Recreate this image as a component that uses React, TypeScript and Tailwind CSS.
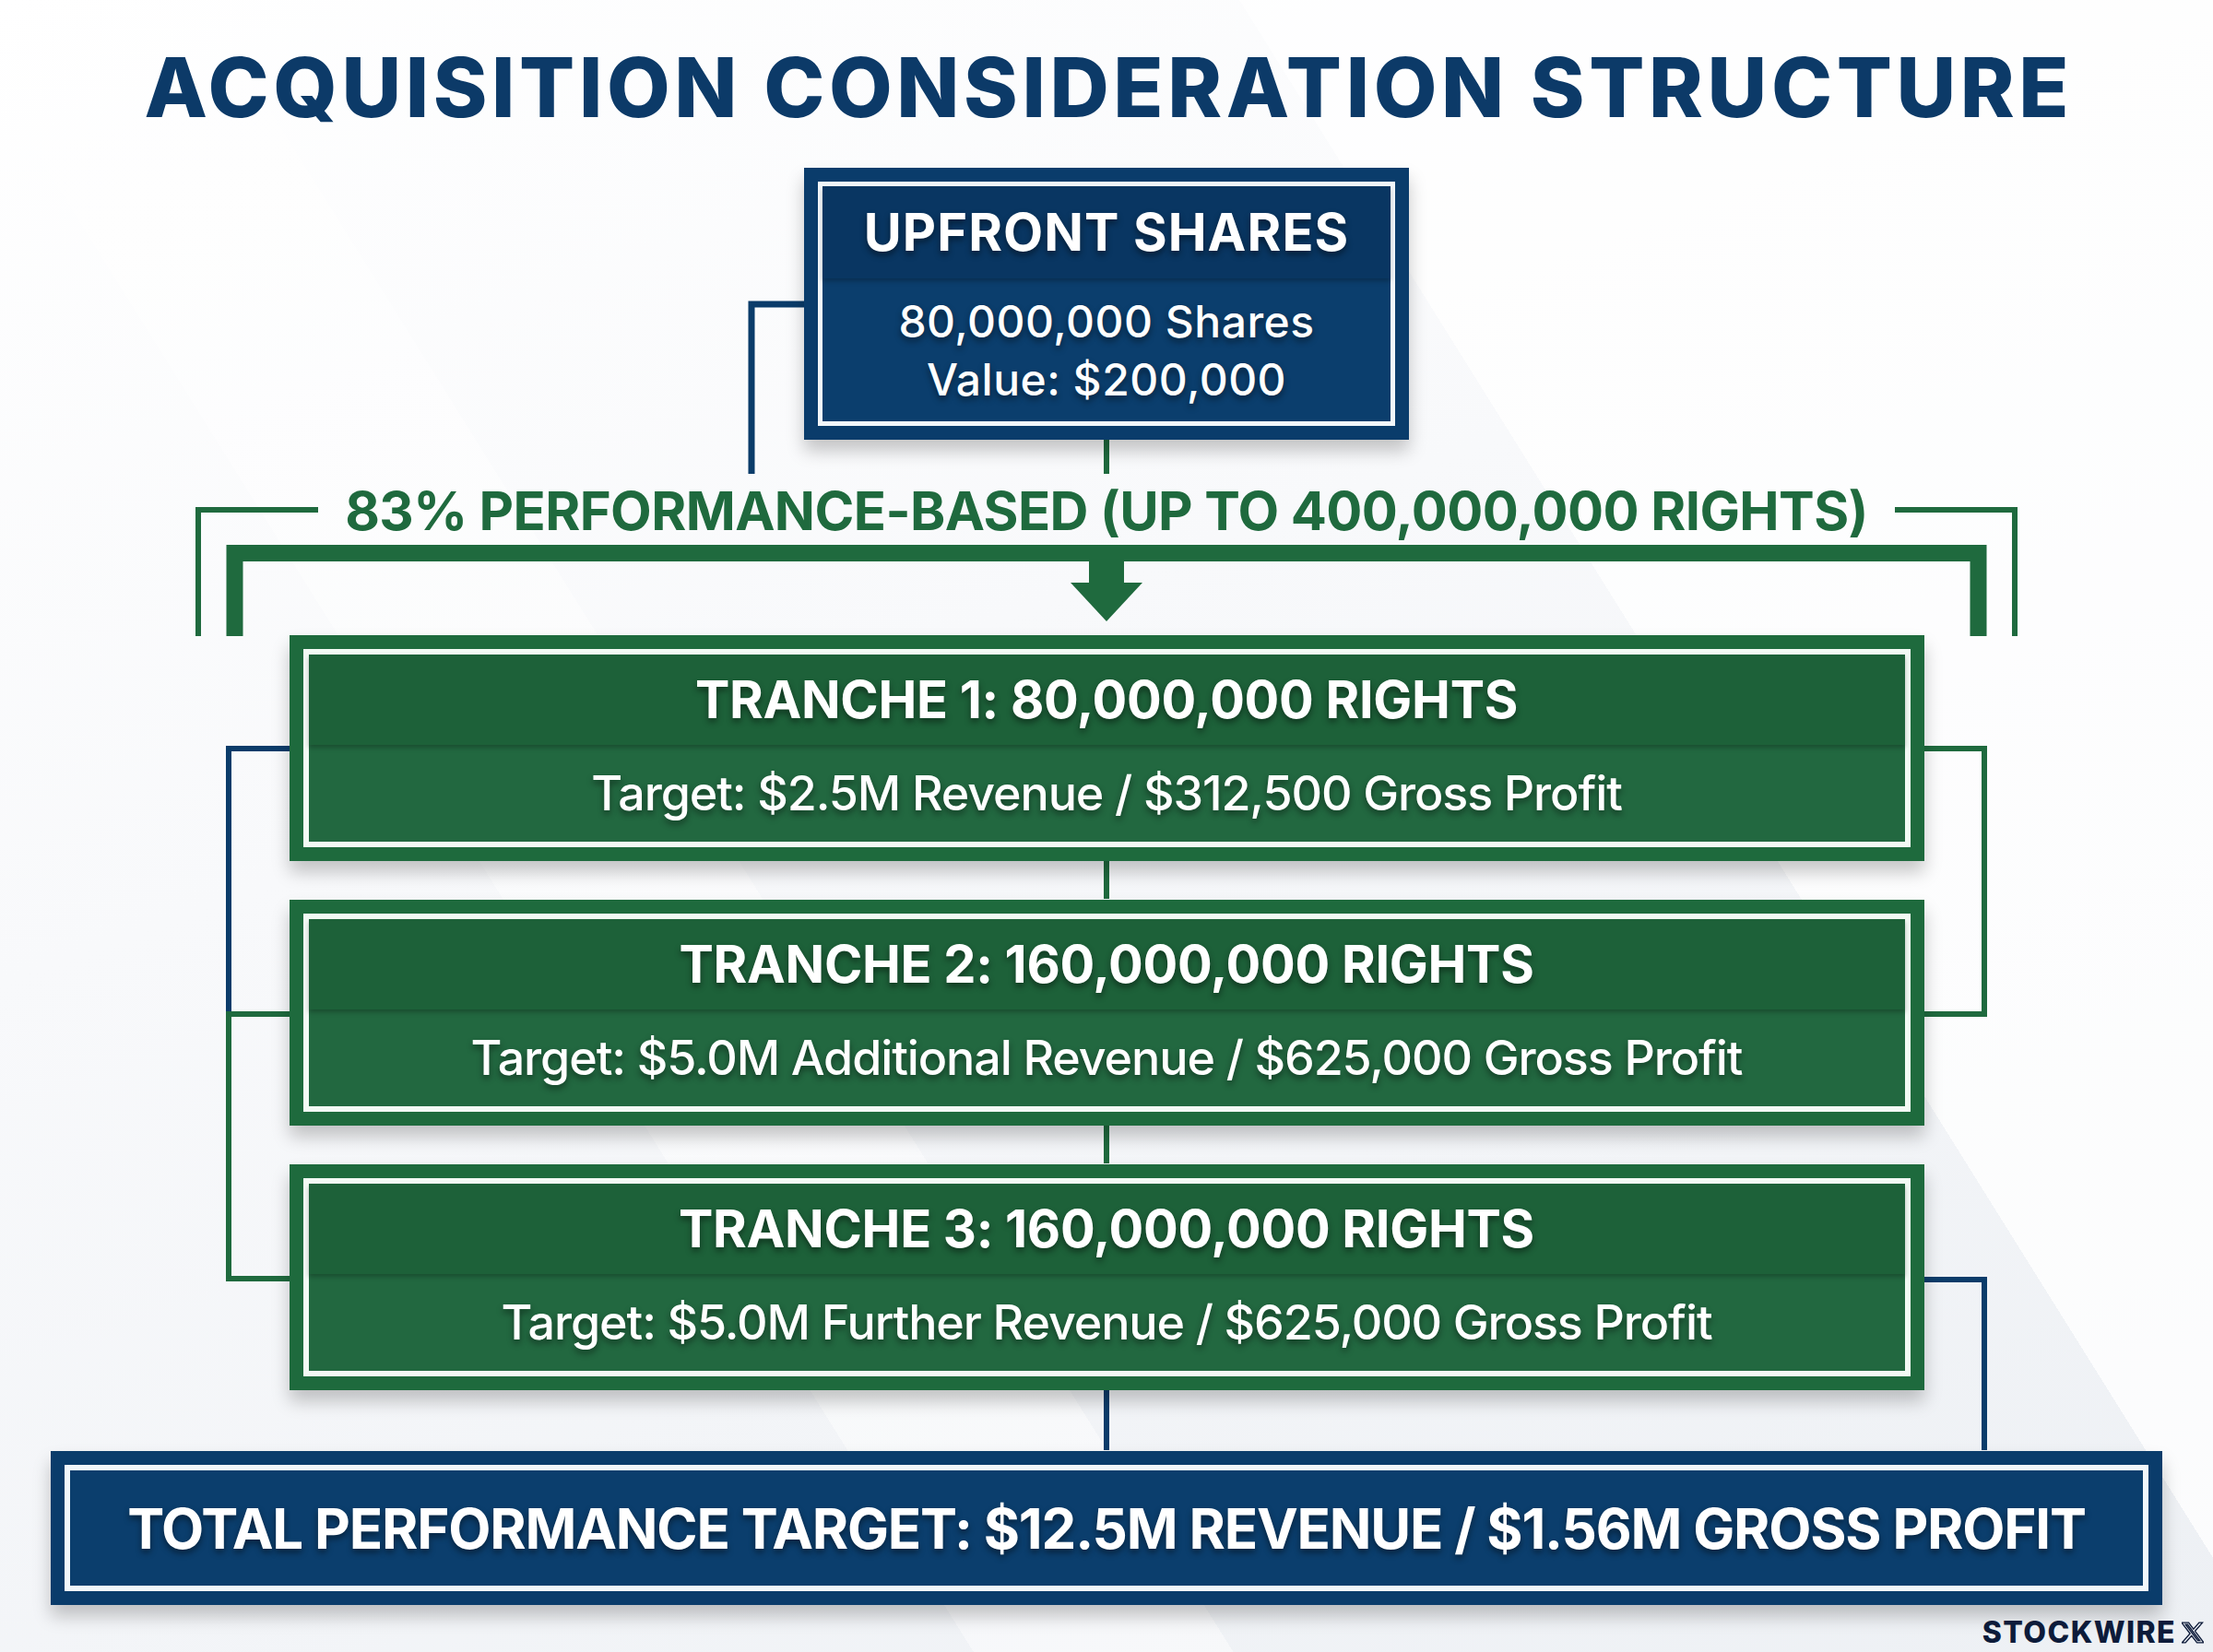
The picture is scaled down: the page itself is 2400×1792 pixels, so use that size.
const NAVY = '#0b3c6a'
const GREEN = '#1f6a3e'

const shadowText = '[text-shadow:0_4px_7px_rgba(0,0,0,0.45)]'

function Tranche({ title, target }: { title: string; target: string }) {
  return (
    <div className="h-[245px] w-[1773px] bg-[#1e6a3d] p-[15px] shadow-[0_12px_18px_rgba(0,0,0,0.22)]">
      <div className="flex h-full flex-col border-[6px] border-[#f3faf5]">
        <div className="relative z-10 flex h-[98px] items-center justify-center bg-[#1d6139] shadow-[0_3px_5px_rgba(0,0,0,0.25)]">
          <span className={`text-[56px] font-bold leading-none tracking-[-0.3px] text-white ${shadowText}`}>{title}</span>
        </div>
        <div className="flex flex-1 items-center justify-center bg-[#226840]">
          <span className={`text-[52px] font-medium leading-none tracking-[-1.1px] text-white ${shadowText}`}>{target}</span>
        </div>
      </div>
    </div>
  )
}

function Connectors() {
  return (
    <svg className="pointer-events-none absolute inset-0" width="2400" height="1792" viewBox="0 0 2400 1792" fill="none">
      {/* upfront to heading */}
      <path d="M872 330 H815 V514" stroke={NAVY} strokeWidth="7" />
      <path d="M1200 477 V514" stroke={GREEN} strokeWidth="6" />
      {/* thin brackets by heading */}
      <path d="M345 553 H215 V690" stroke={GREEN} strokeWidth="6" />
      <path d="M2055 553 H2185 V690" stroke={GREEN} strokeWidth="6" />
      {/* thick bracket + arrow */}
      <path d="M254.5 690 V600 H2145.5 V690" stroke={GREEN} strokeWidth="18" />
      <rect x="1181" y="608" width="38" height="26" fill={GREEN} />
      <path d="M1161 632 H1239 L1200 674 Z" fill={GREEN} />
      {/* center links */}
      <path d="M1200 933 V975 M1200 1220 V1262" stroke={GREEN} strokeWidth="6" />
      <path d="M1200 1507 V1573" stroke={NAVY} strokeWidth="6" />
      {/* left side */}
      <path d="M314 812 H248 V1100" stroke={NAVY} strokeWidth="6" />
      <path d="M314 1100 H248 V1387 H314" stroke={GREEN} strokeWidth="6" />
      {/* right side */}
      <path d="M2087 812 H2152 V1100 H2087" stroke={GREEN} strokeWidth="6" />
      <path d="M2087 1388 H2152 V1573" stroke={NAVY} strokeWidth="6" />
    </svg>
  )
}

export default function App() {
  return (
    <div className="relative h-[1792px] w-[2400px] overflow-hidden bg-[#eef1f5] font-['Inter','Noto_Sans',sans-serif]">
      <div className="absolute inset-0 bg-[linear-gradient(160deg,#ffffff_0%,#f8f9fb_40%,#edf0f4_100%)]" />
      <div className="absolute inset-0 bg-[linear-gradient(58deg,transparent_0%,transparent_30%,rgba(255,255,255,0.45)_30%,rgba(255,255,255,0.45)_38%,transparent_38%,transparent_70%,rgba(255,255,255,0.8)_70%)]" />
      <Connectors />

      <div className="relative flex flex-col items-center">
        <h1 className="pt-[50px] pl-[4.6px] text-[89px] font-extrabold leading-none tracking-[4.6px] text-[#0c3a68]">
          ACQUISITION CONSIDERATION STRUCTURE
        </h1>

        <div className="mt-[43px] h-[295px] w-[656px] bg-[#0a3c6b] p-[15px] shadow-[0_12px_18px_rgba(0,0,0,0.22)]">
          <div className="flex h-full flex-col border-[5px] border-[#f2f7fb]">
            <div className="relative z-10 flex h-[100px] items-center justify-center bg-[#093662] shadow-[0_3px_5px_rgba(0,0,0,0.25)]">
              <span className={`text-[56px] font-bold leading-none tracking-[1.1px] text-white ${shadowText}`}>UPFRONT SHARES</span>
            </div>
            <div className="flex flex-1 flex-col items-center justify-center bg-[#0b3e6d] text-[48px] font-medium leading-[63px] tracking-[0.5px] text-white">
              <span className={shadowText}>80,000,000 Shares</span>
              <span className={shadowText}>Value: $200,000</span>
            </div>
          </div>
        </div>

        <div className="mt-[48px] text-[58px] font-bold leading-none tracking-[-0.6px] text-[#1f6a3e]">
          83% PERFORMANCE-BASED (UP TO 400,000,000 RIGHTS)
        </div>

        <div className="mt-[106px] flex flex-col gap-[42px]">
          <Tranche title="TRANCHE 1: 80,000,000 RIGHTS" target="Target: $2.5M Revenue / $312,500 Gross Profit" />
          <Tranche title="TRANCHE 2: 160,000,000 RIGHTS" target="Target: $5.0M Additional Revenue / $625,000 Gross Profit" />
          <Tranche title="TRANCHE 3: 160,000,000 RIGHTS" target="Target: $5.0M Further Revenue / $625,000 Gross Profit" />
        </div>

        <div className="mt-[66px] h-[167px] w-[2290px] bg-[#0a3c6b] p-[15px] shadow-[0_12px_18px_rgba(0,0,0,0.22)]">
          <div className="flex h-full items-center justify-center border-[6px] border-[#f2f7fb] bg-[#0b3e6d]">
            <span className={`text-[60px] font-bold leading-none tracking-[-1.2px] text-white ${shadowText}`}>
              TOTAL PERFORMANCE TARGET: $12.5M REVENUE / $1.56M GROSS PROFIT
            </span>
          </div>
        </div>

        <div className="mt-[14px] flex w-full items-center justify-end gap-[6px] pr-[10px]">
          <span className="text-[32px] font-extrabold leading-none tracking-[1.4px] text-[#0d1b3a]">STOCKWIRE</span>
          <svg width="24" height="24" viewBox="0 0 24 24" fill="none">
            <path d="M18.901 1.153h3.68l-8.04 9.19L24 22.846h-7.406l-5.8-7.584-6.638 7.584H.474l8.6-9.83L0 1.154h7.594l5.243 6.932ZM17.61 20.644h2.039L6.486 3.24H4.298Z" stroke="#0d1b3a" strokeWidth="1.4" />
          </svg>
        </div>
      </div>
    </div>
  )
}
